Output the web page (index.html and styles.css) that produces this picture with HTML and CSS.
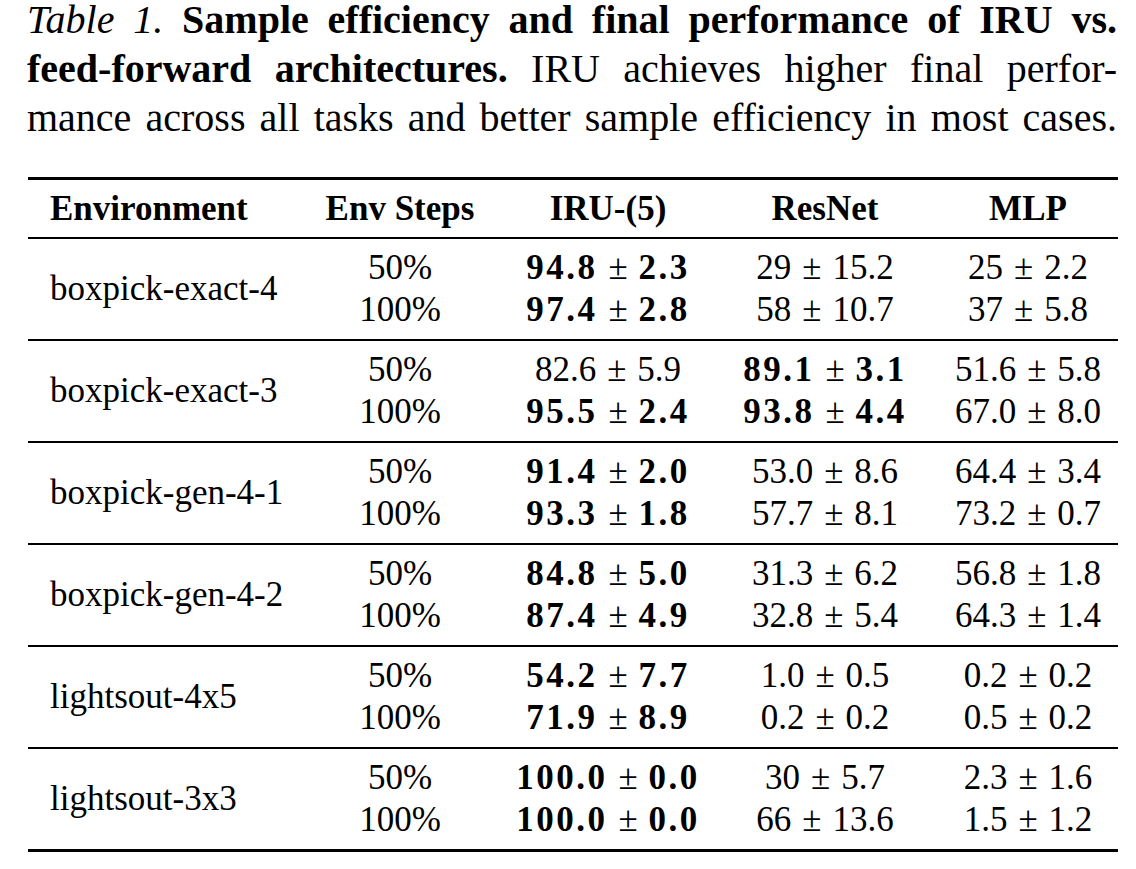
FILE: index.html
```html
<!DOCTYPE html>
<html>
<head>
<meta charset="utf-8">
<link rel="stylesheet" href="styles.css">
</head>
<body>
<div class="page">
  <p class="caption"><span class="label">Table 1.</span> <strong>Sample efficiency and final performance of IRU vs.<br>feed-forward architectures.</strong> IRU achieves higher final perfor-<br>mance across all tasks and better sample efficiency in most cases.</p>
  <table class="results">
    <colgroup>
      <col class="c-env"><col class="c-steps"><col class="c-iru"><col class="c-res"><col class="c-mlp">
    </colgroup>
    <thead>
      <tr><th class="env">Environment</th><th>Env Steps</th><th>IRU-(5)</th><th>ResNet</th><th>MLP</th></tr>
    </thead>
    <tbody>
      <tr class="first"><td class="env" rowspan="2">boxpick-exact-4</td><td>50%</td><td><b>94.8</b><span class="pm">±</span><b>2.3</b></td><td>29<span class="pm">±</span>15.2</td><td>25<span class="pm">±</span>2.2</td></tr>
      <tr class="last"><td>100%</td><td><b>97.4</b><span class="pm">±</span><b>2.8</b></td><td>58<span class="pm">±</span>10.7</td><td>37<span class="pm">±</span>5.8</td></tr>
    </tbody>
    <tbody>
      <tr class="first"><td class="env" rowspan="2">boxpick-exact-3</td><td>50%</td><td>82.6<span class="pm">±</span>5.9</td><td><b>89.1</b><span class="pm">±</span><b>3.1</b></td><td>51.6<span class="pm">±</span>5.8</td></tr>
      <tr class="last"><td>100%</td><td><b>95.5</b><span class="pm">±</span><b>2.4</b></td><td><b>93.8</b><span class="pm">±</span><b>4.4</b></td><td>67.0<span class="pm">±</span>8.0</td></tr>
    </tbody>
    <tbody>
      <tr class="first"><td class="env" rowspan="2">boxpick-gen-4-1</td><td>50%</td><td><b>91.4</b><span class="pm">±</span><b>2.0</b></td><td>53.0<span class="pm">±</span>8.6</td><td>64.4<span class="pm">±</span>3.4</td></tr>
      <tr class="last"><td>100%</td><td><b>93.3</b><span class="pm">±</span><b>1.8</b></td><td>57.7<span class="pm">±</span>8.1</td><td>73.2<span class="pm">±</span>0.7</td></tr>
    </tbody>
    <tbody>
      <tr class="first"><td class="env" rowspan="2">boxpick-gen-4-2</td><td>50%</td><td><b>84.8</b><span class="pm">±</span><b>5.0</b></td><td>31.3<span class="pm">±</span>6.2</td><td>56.8<span class="pm">±</span>1.8</td></tr>
      <tr class="last"><td>100%</td><td><b>87.4</b><span class="pm">±</span><b>4.9</b></td><td>32.8<span class="pm">±</span>5.4</td><td>64.3<span class="pm">±</span>1.4</td></tr>
    </tbody>
    <tbody>
      <tr class="first"><td class="env" rowspan="2">lightsout-4x5</td><td>50%</td><td><b>54.2</b><span class="pm">±</span><b>7.7</b></td><td>1.0<span class="pm">±</span>0.5</td><td>0.2<span class="pm">±</span>0.2</td></tr>
      <tr class="last"><td>100%</td><td><b>71.9</b><span class="pm">±</span><b>8.9</b></td><td>0.2<span class="pm">±</span>0.2</td><td>0.5<span class="pm">±</span>0.2</td></tr>
    </tbody>
    <tbody class="final">
      <tr class="first"><td class="env" rowspan="2">lightsout-3x3</td><td>50%</td><td><b>100.0</b><span class="pm">±</span><b>0.0</b></td><td>30<span class="pm">±</span>5.7</td><td>2.3<span class="pm">±</span>1.6</td></tr>
      <tr class="last"><td>100%</td><td><b>100.0</b><span class="pm">±</span><b>0.0</b></td><td>66<span class="pm">±</span>13.6</td><td>1.5<span class="pm">±</span>1.2</td></tr>
    </tbody>
  </table>
</div>
</body>
</html>
```

FILE: styles.css
```css
html, body {
  margin: 0;
  padding: 0;
  background: #ffffff;
}
body {
  font-family: "Liberation Serif", "Times New Roman", serif;
  color: #000000;
}
.page {
  width: 1090px;
  padding-left: 27px;
}
.caption {
  margin: -5px 0 0 0;
  font-size: 40px;
  line-height: 49px;
  text-align: justify;
  text-align-last: justify;
  white-space: nowrap;
}
.caption .label {
  font-style: italic;
}
.results {
  margin-top: 35px;
  margin-left: 1px;
  width: 1090px;
  border-collapse: collapse;
  table-layout: fixed;
  font-size: 35px;
}
.c-env { width: 268px; }
.c-steps { width: 208px; }
.c-iru { width: 208px; }
.c-res { width: 226px; }
.c-mlp { width: 180px; }
.results thead tr {
  border-top: 3px solid #000;
  border-bottom: 2px solid #000;
}
.results th {
  font-weight: bold;
  height: 57px;
  padding: 0;
  text-align: center;
  vertical-align: middle;
  line-height: 40px;
}
.results th.env, .results td.env {
  text-align: left;
  padding-left: 22px;
}
.results td {
  padding: 0;
  text-align: center;
  line-height: 42px;
  height: 42px;
  white-space: nowrap;
}
.results td.env {
  vertical-align: middle;
}
.results tr.first td {
  padding-top: 8px;
}
.results tr.last td {
  padding-bottom: 8px;
}
.results tr.first td.env {
  padding-bottom: 8px;
}
.results tbody {
  border-bottom: 2px solid #000;
}
.results tbody.final {
  border-bottom: 3px solid #000;
}
.results b {
  font-weight: bold;
  letter-spacing: 2.5px;
}
.pm {
  display: inline-block;
  padding: 0 11px;
}
```
